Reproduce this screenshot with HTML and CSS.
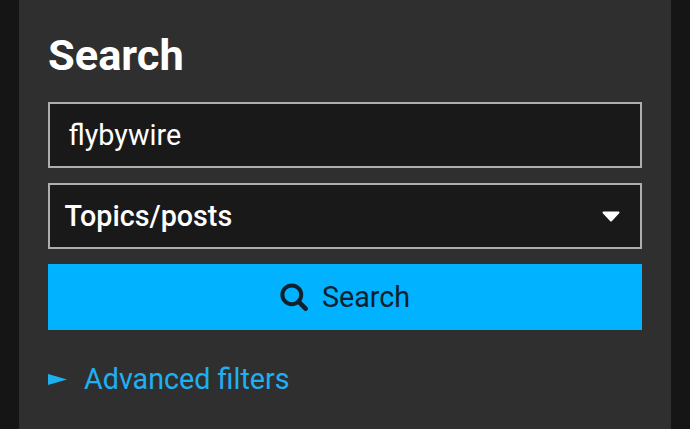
FILE: index.html
```html
<!DOCTYPE html>
<html lang="en">
<head>
<meta charset="utf-8">
<title>Search</title>
<link rel="stylesheet" href="styles.css">
</head>
<body>
<main class="panel">
  <h1 class="title">Search</h1>
  <div class="field field-input">flybywire</div>
  <div class="field field-select">
    <span>Topics/posts</span>
    <svg class="caret" viewBox="0 0 18 11" aria-hidden="true"><path d="M1.5 1.5h15L9 9.5z" fill="#fff" stroke="#fff" stroke-width="2" stroke-linejoin="round"/></svg>
  </div>
  <div class="button">
    <svg class="icon" viewBox="0 0 28 28" aria-hidden="true"><circle cx="11.8" cy="11.8" r="9.4" fill="none" stroke="#10202c" stroke-width="4"/><path d="M18.8 18.8l6.8 6.8" fill="none" stroke="#10202c" stroke-width="4.6" stroke-linecap="round"/></svg>
    <span>Search</span>
  </div>
  <div class="filters">
    <svg class="arrow" viewBox="0 0 19 11" aria-hidden="true"><path d="M0 0l19 5.5L0 11z" fill="#1fb0f2"/></svg>
    <span>Advanced filters</span>
  </div>
</main>
</body>
</html>
```
FILE: styles.css
```css
html, body {
  margin: 0;
  height: 100%;
}
body {
  background: #151515;
  overflow: hidden;
  font-family: Roboto, sans-serif;
}
.panel {
  box-sizing: border-box;
  width: 652px;
  height: 429px;
  margin-left: 19px;
  padding: 31px 29px 0;
  background: #2f2f2f;
}
.title {
  margin: 0 0 20px;
  height: 51px;
  font-size: 43.4px;
  line-height: 50px;
  font-weight: 700;
  color: #fff;
}
.field {
  box-sizing: border-box;
  height: 66px;
  display: flex;
  align-items: center;
  background: #191919;
  border: 2px solid #aeaeae;
  color: #fff;
  font-size: 28.7px;
}
.field-input {
  padding-left: 18.5px;
  margin-bottom: 15px;
}
.field-select {
  justify-content: space-between;
  padding: 0 20px 0 14.5px;
  font-weight: 500;
  margin-bottom: 15px;
}
.caret {
  width: 18px;
  height: 11px;
}
.button {
  height: 66px;
  display: flex;
  align-items: center;
  justify-content: center;
  gap: 14px;
  background: #00b2ff;
  color: #10202c;
  font-size: 28.7px;
}
.icon {
  width: 28px;
  height: 28px;
}
.filters {
  display: flex;
  align-items: center;
  gap: 17px;
  margin-top: 31px;
  height: 36px;
  color: #1fb0f2;
  font-size: 28.7px;
}
.arrow {
  width: 19px;
  height: 11px;
}
```
